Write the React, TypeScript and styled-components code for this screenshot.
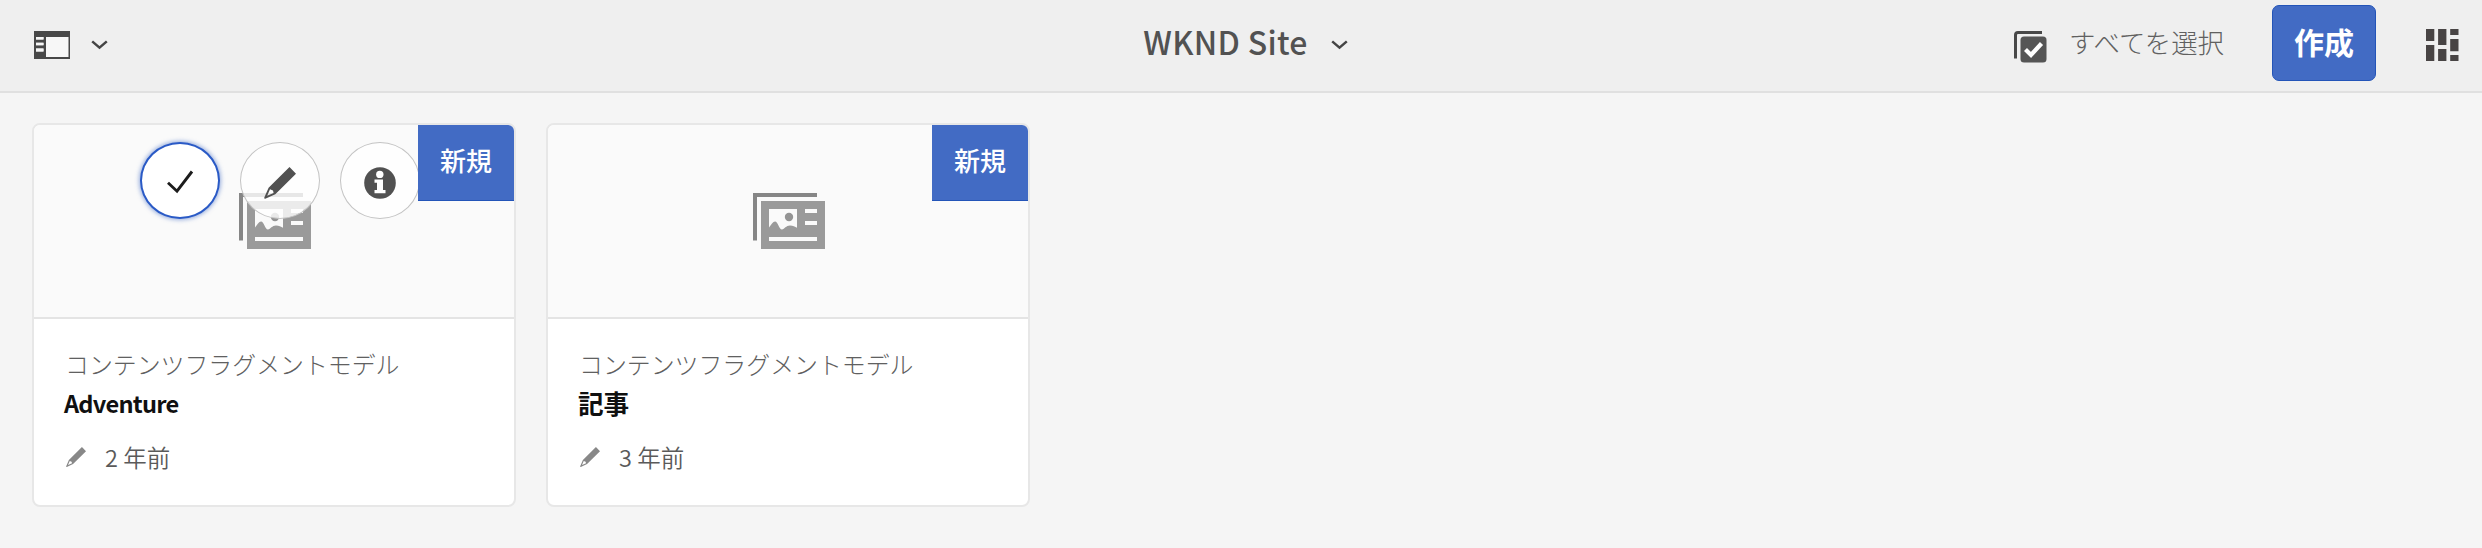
import React from "react";
import styled, { createGlobalStyle, css } from "styled-components";

const GlobalStyle = createGlobalStyle`
  * { box-sizing: border-box; }
  body {
    margin: 0;
    background: #f5f5f5;
    font-family: "Noto Sans CJK JP", sans-serif;
    color: #4b4b4b;
  }
  svg { display: block; flex: none; }
  button { font-family: inherit; cursor: pointer; }
`;

const Page = styled.div`
  min-height: 548px;
  background: #f5f5f5;
`;

const Toolbar = styled.header`
  display: grid;
  grid-template-columns: 1fr auto 1fr;
  height: 93px;
  padding: 0 23px 0 34px;
  background: #efefef;
  border-bottom: 2px solid #e0e0e0;
`;

const RailToggle = styled.button`
  display: flex;
  align-items: flex-start;
  gap: 21px;
  padding: 31px 0 0;
  border: 0;
  background: none;
  justify-self: start;
`;

const TitleButton = styled.button`
  display: flex;
  align-items: flex-start;
  gap: 23px;
  padding: 0;
  margin-left: -2px;
  border: 0;
  background: none;
  color: #525252;
`;

const Title = styled.span`
  font-size: 32px;
  line-height: 48px;
  font-weight: 500;
  letter-spacing: 0.3px;
  padding-top: 17px;
  white-space: nowrap;
`;

const ChevronBox = styled.span<{ $top: number }>`
  display: block;
  padding-top: ${(p) => p.$top}px;
`;

const Actions = styled.div`
  display: flex;
  justify-self: end;
  align-items: flex-start;
`;

const SelectAll = styled.button`
  display: flex;
  align-items: flex-start;
  gap: 22px;
  padding: 31px 0 0;
  margin-right: 48px;
  border: 0;
  background: none;
  color: #606060;
  font-size: 26.4px;
  line-height: 26px;
  font-weight: 300;
  white-space: nowrap;
`;

const SelectLabel = styled.span`
  margin-top: -2px;
`;

const CreateButton = styled.button`
  width: 104px;
  height: 76px;
  margin-top: 5px;
  padding: 0 0 4px;
  border: 1px solid #2354b8;
  border-radius: 7px;
  background: #426bc4;
  color: #fff;
  font-size: 30px;
  line-height: 40px;
  font-weight: 700;
`;

const ViewSwitch = styled.button`
  margin-left: 50px;
  padding: 29px 0 0;
  border: 0;
  background: none;
`;

const CardGrid = styled.main`
  display: flex;
  gap: 30px;
  padding: 30px 32px;
`;

const Card = styled.article`
  position: relative;
  width: 484px;
  height: 384px;
  border: 2px solid #e7e7e7;
  border-radius: 8px;
  background: #fff;
`;

const Preview = styled.div`
  display: flex;
  justify-content: center;
  align-items: flex-start;
  height: 194px;
  padding: 68px 0 0 1px;
  border-bottom: 2px solid #e4e4e4;
  border-radius: 6px 6px 0 0;
  background: #fafafa;
`;

const Badge = styled.span`
  position: absolute;
  top: 0;
  right: 0;
  display: flex;
  align-items: center;
  justify-content: center;
  width: 96px;
  height: 76px;
  padding-bottom: 5px;
  border-bottom: 1px solid #2354b8;
  border-radius: 0 6px 0 0;
  background: #426bc4;
  color: #fff;
  font-size: 26px;
  line-height: 36px;
  font-weight: 500;
`;

const QuickActions = styled.div`
  position: absolute;
  top: 17px;
  left: 106px;
  display: flex;
  gap: 20px;
`;

const QuickAction = styled.button<{ $active?: boolean }>`
  display: flex;
  align-items: center;
  justify-content: center;
  width: 80px;
  height: 77px;
  padding: 0;
  border: 1.5px solid #c4c4c4;
  border-radius: 50%;
  background: rgba(255, 255, 255, 0.8);
  ${(p) =>
    p.$active &&
    css`
      border: 2px solid #2a5ac6;
      background: #fff;
      box-shadow: 0 0 4px 1px rgba(66, 107, 196, 0.55);
    `}
`;

const CardBody = styled.div`
  display: flex;
  flex-direction: column;
  padding: 27px 30px 0;
`;

const Kind = styled.span`
  font-size: 23.9px;
  line-height: 36px;
  font-weight: 300;
  padding-left: 1px;
  color: #606060;
  white-space: nowrap;
`;

const CardTitle = styled.h2<{ $latin?: boolean }>`
  margin: 2px 0 0;
  font-size: ${(p) => (p.$latin ? 23.6 : 25.6)}px;
  letter-spacing: ${(p) => (p.$latin ? "-0.75px" : "normal")};
  line-height: 38px;
  font-weight: 700;
  color: #101010;
`;

const Modified = styled.div`
  display: flex;
  align-items: center;
  gap: 19px;
  margin-top: 17px;
  padding-left: 2px;
  font-size: 23.5px;
  line-height: 36px;
  font-weight: 350;
  color: #5a5a5a;
`;

const Chevron = () => (
  <svg width="17" height="10" viewBox="0 0 17 10" fill="none">
    <path d="M1.2 1.4 L8.5 7.6 L15.8 1.4" stroke="#444" strokeWidth="2.5" />
  </svg>
);

const RailIcon = () => (
  <svg width="36" height="28" viewBox="0 0 36 28">
    <path
      fillRule="evenodd"
      fill="#484848"
      d="M0 0H36V28H0Z M12 6V26H34.3V6Z M2 6V8.4H9.5V6Z M2 11.7V14.2H9.5V11.7Z M2 17.6V20.4H9.5V17.6Z"
    />
    <path fill="#f7f7f7" d="M12 6H34.3V26H12Z M2 6H9.5V8.4H2Z M2 11.7H9.5V14.2H2Z M2 17.6H9.5V20.4H2Z" />
  </svg>
);

const SelectAllIcon = () => (
  <svg width="33" height="33" viewBox="0 0 33 33">
    <path d="M28 1.5H4Q1.5 1.5 1.5 4V27.5" fill="none" stroke="#484848" strokeWidth="3" />
    <rect x="6.5" y="5.5" width="26" height="26" rx="3.5" fill="#555" />
    <path d="M11.5 18.5L17 24L27.5 12.5" fill="none" stroke="#fff" strokeWidth="4.2" />
  </svg>
);

const ViewIcon = () => (
  <svg width="33" height="32" viewBox="0 0 33 32" fill="#484444">
    <path d="M0 0h8.3v12H0z M0 16h8.3v16H0z M12.1 0h8.3v16h-8.3z M12.1 20h8.3v12h-8.3z M24.2 0h8.3v6h-8.3z M24.2 10h8.3v12.3h-8.3z M24.2 26h8.3v6h-8.3z" />
  </svg>
);

const ModelIcon = () => (
  <svg width="72" height="56" viewBox="0 0 72 56">
    <path fill="#868686" d="M0 0H64V4H4V47.5H0Z" />
    <path
      fillRule="evenodd"
      fill="#9a9a9a"
      d="M8 8H72V56H8Z M16 16V34.5C18 32 20 28.5 22 28.5C25 28.5 26 36.5 29 36.5C31.5 36 33 32.5 37 32.5C40 32.5 42 34 44 34.8V16Z M52 16V20H64V16Z M52 28V32H64V28Z M16 44V48H64V44Z"
    />
    <circle cx="36" cy="24" r="4.2" fill="#949494" />
  </svg>
);

const CheckIcon = () => (
  <svg width="28" height="26" viewBox="0 0 28 26" fill="none">
    <path d="M2 13.8L11 22.2L26 2.5" stroke="#1c1c1c" strokeWidth="2.9" />
  </svg>
);

const PencilIcon = ({ size, color }: { size: number; color: string }) => (
  <svg width={size} height={size} viewBox="0 0 32 32">
    <path
      fillRule="evenodd"
      fill={color}
      d="M25.5 0L32 6.7L11.3 27.3L1.3 31.8Q0 32 .3 30.6L4.6 20.8Z M6 22.2L3.2 28.8L9.6 26L9 23.4Z"
    />
  </svg>
);

const InfoIcon = () => (
  <svg width="32" height="32" viewBox="0 0 32 32">
    <circle cx="16" cy="16" r="15.8" fill="#515151" />
    <circle cx="15.8" cy="7.4" r="3.7" fill="#fff" />
    <path d="M10.5 12.5H19V23H21.5V26.2H10.5V23H13V15.7H10.5Z" fill="#fff" />
  </svg>
);

const IconNudge = styled.span<{ $y?: number }>`
  padding-top: ${(p) => p.$y ?? 0}px;
`;

type ModelCardProps = { title: string; modified: string; latin?: boolean; hovered?: boolean };

const ModelCard = ({ title, modified, latin, hovered }: ModelCardProps) => (
  <Card>
    <Preview>
      <ModelIcon />
    </Preview>
    {hovered && (
      <QuickActions>
        <QuickAction $active aria-label="選択">
          <IconNudge $y={3}><CheckIcon /></IconNudge>
        </QuickAction>
        <QuickAction aria-label="編集">
          <IconNudge $y={4}><PencilIcon size={32} color="#515151" /></IconNudge>
        </QuickAction>
        <QuickAction aria-label="プロパティ">
          <IconNudge $y={4}><InfoIcon /></IconNudge>
        </QuickAction>
      </QuickActions>
    )}
    <Badge>新規</Badge>
    <CardBody>
      <Kind>コンテンツフラグメントモデル</Kind>
      <CardTitle $latin={latin}>{title}</CardTitle>
      <Modified>
        <PencilIcon size={20} color="#888" />
        {modified}
      </Modified>
    </CardBody>
  </Card>
);

export default function App() {
  return (
    <Page>
      <GlobalStyle />
      <Toolbar>
        <RailToggle aria-label="サイドパネル">
          <RailIcon />
          <ChevronBox $top={9}><Chevron /></ChevronBox>
        </RailToggle>
        <TitleButton>
          <Title>WKND Site</Title>
          <ChevronBox $top={40}><Chevron /></ChevronBox>
        </TitleButton>
        <Actions>
          <SelectAll>
            <SelectAllIcon />
            <SelectLabel>すべてを選択</SelectLabel>
          </SelectAll>
          <CreateButton>作成</CreateButton>
          <ViewSwitch aria-label="表示切替"><ViewIcon /></ViewSwitch>
        </Actions>
      </Toolbar>
      <CardGrid>
        <ModelCard title="Adventure" modified="2 年前" latin hovered />
        <ModelCard title="記事" modified="3 年前" />
      </CardGrid>
    </Page>
  );
}
